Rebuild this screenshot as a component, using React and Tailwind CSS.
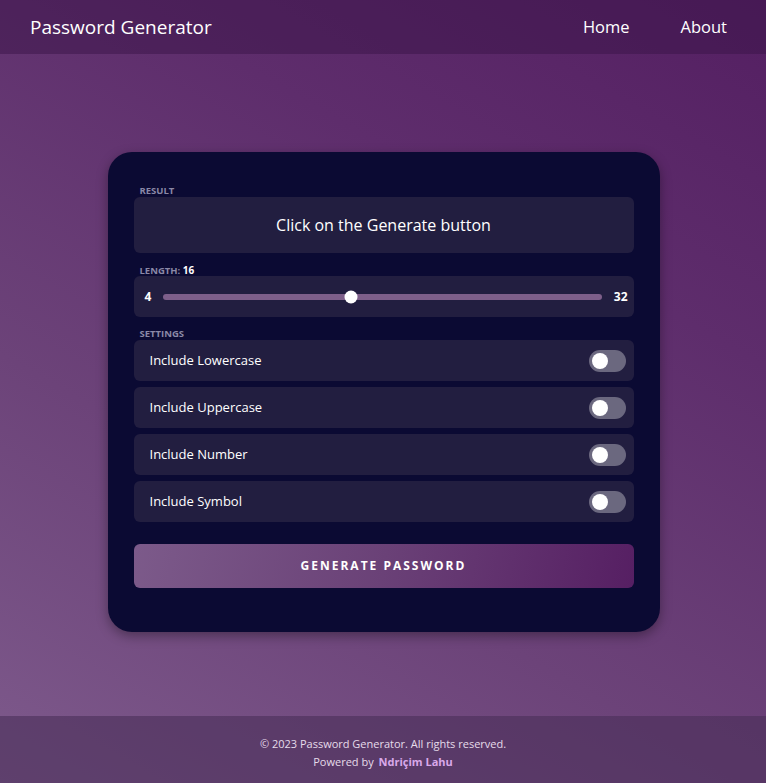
import { useState } from "react"

const options = [
  { key: "lower", label: "Include Lowercase" },
  { key: "upper", label: "Include Uppercase" },
  { key: "number", label: "Include Number" },
  { key: "symbol", label: "Include Symbol" },
]

function Toggle({ on, onClick }) {
  return (
    <button
      onClick={onClick}
      className={`relative w-[37px] h-[22px] rounded-full transition-colors ${on ? "bg-[#8b5fa0]" : "bg-[#6b687f]"}`}
    >
      <span
        className={`absolute top-[3px] w-[16px] h-[16px] rounded-full bg-white transition-all ${on ? "left-[18px]" : "left-[3px]"}`}
      />
    </button>
  )
}

export default function App() {
  const [length, setLength] = useState(16)
  const [settings, setSettings] = useState({ lower: false, upper: false, number: false, symbol: false })

  const pct = ((length - 4) / 28) * 100

  return (
    <div
      className="min-h-[783px] flex flex-col text-white bg-[linear-gradient(30deg,#7e5a8c_0%,#6c4379_35%,#5e2d6c_70%,#541f62_100%)]"
      style={{ fontFamily: "'Open Sans', 'DejaVu Sans', sans-serif" }}
    >
      {/* Header */}
      <header className="h-[54px] flex items-center justify-between pl-[30px] pr-[39px] bg-[#3a1448]/50">
        <div className="text-[19px]">Password Generator</div>
        <nav className="flex gap-[51px] text-[16.5px]">
          <a href="#">Home</a>
          <a href="#">About</a>
        </nav>
      </header>

      {/* Main */}
      <main className="flex-1 flex justify-center pt-[98px] pl-[1px]">
        <div className="w-[552px] h-[480px] rounded-[24px] bg-[#0b0a33] px-[26px] pt-[33px] shadow-[0_4px_12px_rgba(0,0,0,0.35)]">
          <div className="h-[12px] leading-[12px] pl-[6px] text-[9.5px] font-bold uppercase text-[#8a88a6]">Result</div>
          <div className="h-[56px] rounded-[6px] bg-[#221e40] flex items-center justify-center text-[16px]">
            Click on the Generate button
          </div>

          <div className="h-[12px] leading-[12px] pl-[6px] mt-[11px] text-[9.5px] font-bold uppercase text-[#8a88a6]">
            Length: <span className="text-white text-[10px]">{length}</span>
          </div>
          <div className="h-[41px] rounded-[6px] bg-[#221e40] flex items-center pl-[11px] pr-[6px] gap-[12px]">
            <span className="text-[12px] font-bold">4</span>
            <div className="relative flex-1 h-[6px] rounded-full bg-[#7e5f8a]">
              <input
                type="range"
                min="4"
                max="32"
                value={length}
                onChange={(e) => setLength(Number(e.target.value))}
                className="absolute inset-0 w-full opacity-0 cursor-pointer"
              />
              <span
                className="absolute top-1/2 -translate-y-1/2 -translate-x-1/2 w-[13px] h-[13px] rounded-full bg-white pointer-events-none"
                style={{ left: `${pct}%` }}
              />
            </div>
            <span className="text-[12px] font-bold">32</span>
          </div>

          <div className="h-[12px] leading-[12px] pl-[6px] mt-[11px] text-[9.5px] font-bold uppercase text-[#8a88a6]">Settings</div>
          <div className="flex flex-col gap-[6px]">
            {options.map((o) => (
              <div key={o.key} className="h-[41px] rounded-[6px] bg-[#221e40] flex items-center justify-between pl-[16px] pr-[8px]">
                <span className="text-[13px]">{o.label}</span>
                <Toggle on={settings[o.key]} onClick={() => setSettings({ ...settings, [o.key]: !settings[o.key] })} />
              </div>
            ))}
          </div>

          <button className="mt-[22px] w-full h-[44px] rounded-[6px] bg-[linear-gradient(100deg,#7c5a8a_0%,#6a4177_50%,#561f63_100%)] text-[12px] font-bold uppercase tracking-[2px]">
            Generate Password
          </button>
        </div>
      </main>

      {/* Footer */}
      <footer className="h-[67px] bg-[#4a2e58]/60 flex flex-col items-center pt-[20px] gap-[1px] text-[11px] text-[#e6dcea]">
        <div>© 2023 Password Generator. All rights reserved.</div>
        <div>
          Powered by <span className="ml-[2px] font-bold text-[#d9a8ea]">Ndriçim Lahu</span>
        </div>
      </footer>
    </div>
  )
}
